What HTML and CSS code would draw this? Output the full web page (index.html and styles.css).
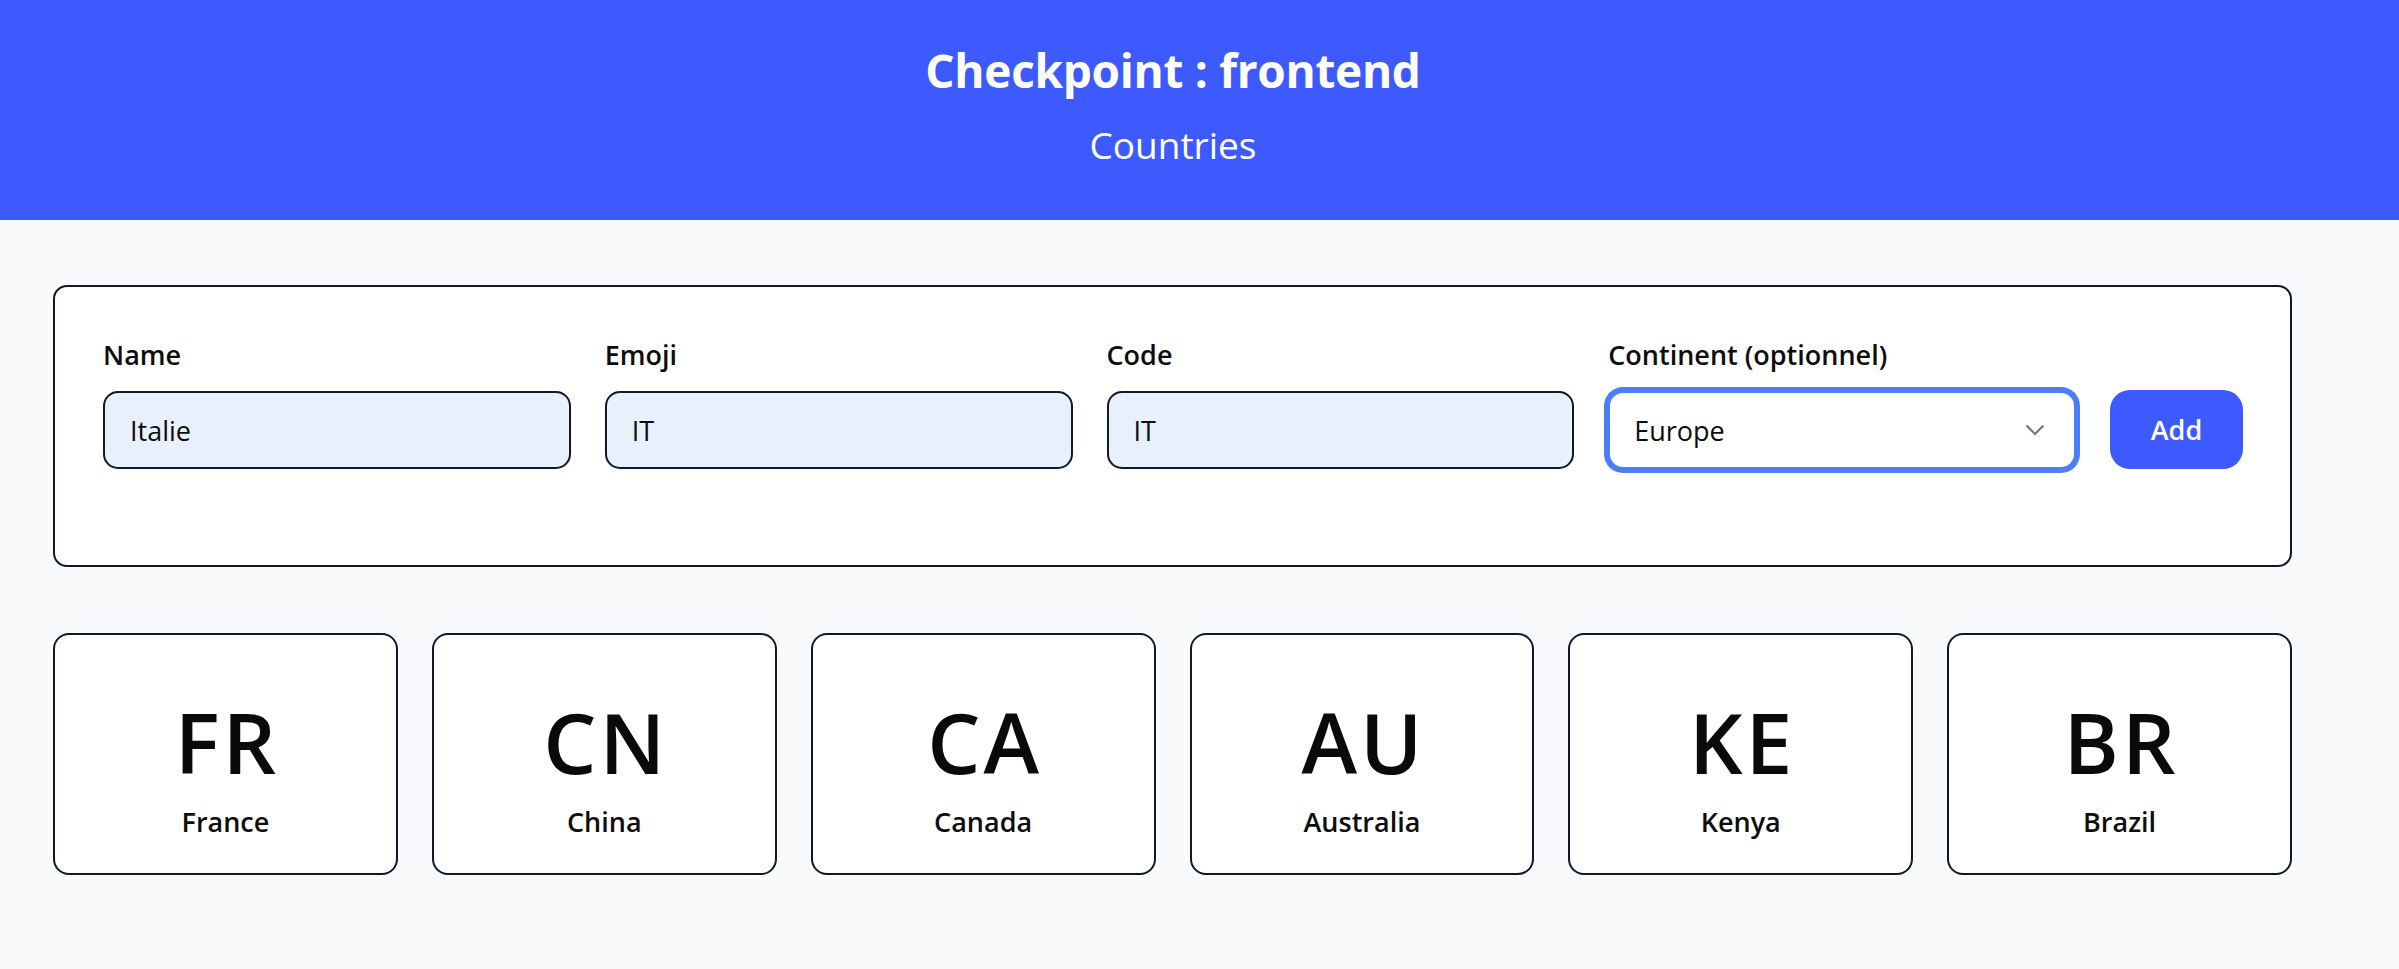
FILE: index.html
```html
<!DOCTYPE html>
<html lang="fr">
<head>
<meta charset="utf-8">
<title>Checkpoint : frontend</title>
<link rel="stylesheet" href="styles.css">
</head>
<body>
<header class="hero">
  <h1 class="hero-title">Checkpoint : frontend</h1>
  <p class="hero-sub">Countries</p>
</header>
<main class="page">
  <form class="form-card">
    <div class="form-row">
      <label class="field">
        <span class="field-label">Name</span>
        <input class="field-input" type="text" value="Italie">
      </label>
      <label class="field">
        <span class="field-label">Emoji</span>
        <input class="field-input" type="text" value="IT">
      </label>
      <label class="field">
        <span class="field-label">Code</span>
        <input class="field-input" type="text" value="IT">
      </label>
      <label class="field">
        <span class="field-label">Continent (optionnel)</span>
        <span class="select-wrap">
          <select class="field-select">
            <option>Europe</option>
            <option>Asia</option>
            <option>Africa</option>
          </select>
          <svg class="chevron" width="20" height="12" viewBox="0 0 20 12"><path d="M1.5 1.5 L10 10 L18.5 1.5" fill="none" stroke="#767676" stroke-width="2.2"/></svg>
        </span>
      </label>
      <button class="add-btn" type="button">Add</button>
    </div>
  </form>
  <section class="country-grid">
    <div class="country-card"><div class="country-flag">FR</div><div class="country-name">France</div></div>
    <div class="country-card"><div class="country-flag">CN</div><div class="country-name">China</div></div>
    <div class="country-card"><div class="country-flag">CA</div><div class="country-name">Canada</div></div>
    <div class="country-card"><div class="country-flag">AU</div><div class="country-name">Australia</div></div>
    <div class="country-card"><div class="country-flag">KE</div><div class="country-name">Kenya</div></div>
    <div class="country-card"><div class="country-flag">BR</div><div class="country-name">Brazil</div></div>
  </section>
</main>
</body>
</html>
```
FILE: styles.css
```css
* { box-sizing: border-box; }
html, body { margin: 0; padding: 0; }
body {
  background: #f9fafb;
  font-family: "Open Sans", "Noto Sans", sans-serif;
  color: #0d0d0d;
  min-height: 969px;
}
.hero {
  background: #3d5afe;
  height: 220px;
  padding: 42px 53px 0 0;
  display: flex;
  flex-direction: column;
  align-items: center;
  color: #fff;
}
.hero-title {
  margin: 0;
  font-size: 46px;
  line-height: 56px;
  font-weight: 700;
  letter-spacing: -0.3px;
}
.hero-sub {
  margin: 23px 0 0;
  font-size: 37px;
  line-height: 48px;
  font-weight: 400;
}
.page {
  padding: 65px 0 0 53px;
}
.form-card {
  width: 2239px;
  background: #fff;
  border: 2px solid #111827;
  border-radius: 14px;
  padding: 48px 47px 96px 48px;
}
.form-row {
  display: flex;
  align-items: flex-end;
  gap: 34px;
}
.field {
  flex: 1;
  display: flex;
  flex-direction: column;
  gap: 16px;
  min-width: 0;
}
.field-label {
  font-size: 27px;
  line-height: 40px;
  font-weight: 600;
  color: #0d0d0d;
}
.field-input {
  height: 78px;
  width: 100%;
  border: 2px solid #111827;
  border-radius: 15px;
  background: #e8f0fe;
  padding: 0 25px;
  font-family: inherit;
  font-size: 27px;
  color: #0d0d0d;
  box-shadow: 0 1px 2px rgba(0,0,0,0.06);
  outline: none;
}
.select-wrap {
  position: relative;
  display: block;
}
.field-select {
  appearance: none;
  -webkit-appearance: none;
  display: block;
  height: 78px;
  width: 100%;
  border: 2px solid #4b7ff6;
  box-shadow: 0 0 0 4px #4b7ff6;
  border-radius: 15px;
  background: #fff;
  padding: 0 24px;
  font-family: inherit;
  font-size: 27px;
  color: #0d0d0d;
  outline: none;
}
.chevron {
  position: absolute;
  right: 31px;
  top: 33px;
  pointer-events: none;
}
.add-btn {
  width: 133px;
  height: 79px;
  flex: none;
  border: none;
  border-radius: 20px;
  background: #3d5afe;
  color: #fff;
  font-family: inherit;
  font-size: 27px;
  font-weight: 600;
  cursor: pointer;
}
.country-grid {
  width: 2239px;
  margin-top: 66px;
  display: grid;
  grid-template-columns: repeat(6, 1fr);
  gap: 34px;
}
.country-card {
  height: 242px;
  background: #fff;
  border: 2px solid #111827;
  border-radius: 16px;
  padding-top: 65px;
  display: flex;
  flex-direction: column;
  align-items: center;
}
.country-flag {
  font-size: 84px;
  line-height: 84px;
  font-weight: 600;
  letter-spacing: 3px;
  padding-left: 3px;
  color: #0a0a0a;
}
.country-name {
  margin-top: 18px;
  font-size: 27px;
  line-height: 40px;
  font-weight: 600;
  color: #0d0d0d;
}
```
